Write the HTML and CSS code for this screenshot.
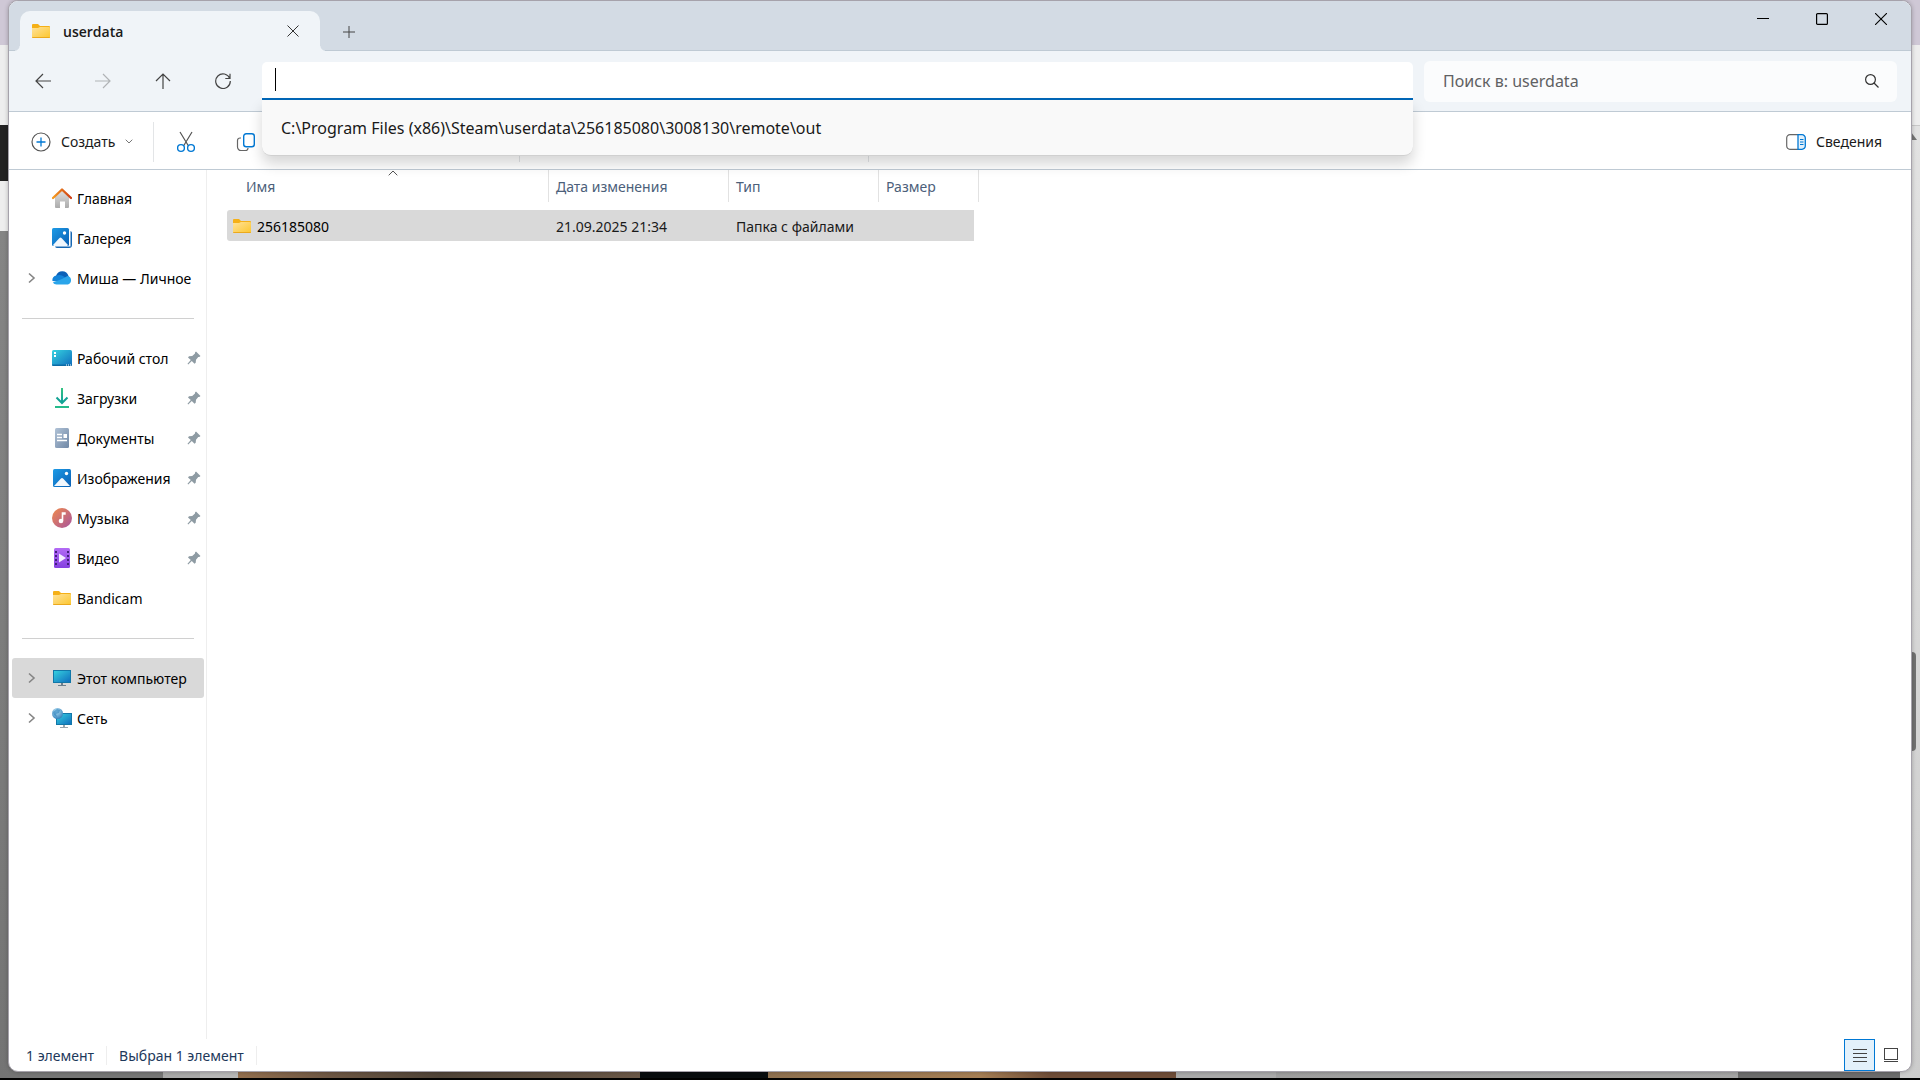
FILE: index.html
```html
<!DOCTYPE html>
<html lang="ru">
<head>
    <meta charset="UTF-8">
    <meta name="viewport" content="width=device-width, initial-scale=1.0">
    <title>userdata</title>
    <link rel="stylesheet" href="styles.css">
</head>
<body>
    <!-- Общие значки -->
    <svg class="defs" width="0" height="0" aria-hidden="true">
        <defs>
            <linearGradient id="g-folder" x1="0" y1="0" x2="1" y2="1">
                <stop offset="0" stop-color="#ffe29a"/><stop offset="1" stop-color="#fcc62e"/>
            </linearGradient>
            <linearGradient id="g-blue" x1="0" y1="0" x2="1" y2="1">
                <stop offset="0" stop-color="#1d9be6"/><stop offset="1" stop-color="#0a5fb4"/>
            </linearGradient>
            <linearGradient id="g-screen" x1="0" y1="0" x2="1" y2="1">
                <stop offset="0" stop-color="#36d3e0"/><stop offset="1" stop-color="#0f6cbd"/>
            </linearGradient>
            <linearGradient id="g-house" x1="0" y1="0" x2="0" y2="1">
                <stop offset="0" stop-color="#e2e2e2"/><stop offset="1" stop-color="#ababab"/>
            </linearGradient>
            <linearGradient id="g-roof" x1="0" y1="0" x2="1" y2="0">
                <stop offset="0" stop-color="#f59b1f"/><stop offset="1" stop-color="#cf3f16"/>
            </linearGradient>
            <linearGradient id="g-down" x1="0" y1="0" x2="0" y2="1">
                <stop offset="0" stop-color="#35c481"/><stop offset="1" stop-color="#0f9fa0"/>
            </linearGradient>
            <linearGradient id="g-doc" x1="0" y1="0" x2="1" y2="1">
                <stop offset="0" stop-color="#b0c2d6"/><stop offset="1" stop-color="#7088a6"/>
            </linearGradient>
            <linearGradient id="g-music" x1="0" y1="0" x2="1" y2="1">
                <stop offset="0" stop-color="#f08a4b"/><stop offset="1" stop-color="#a8559f"/>
            </linearGradient>
            <linearGradient id="g-video" x1="0" y1="0" x2="0" y2="1">
                <stop offset="0" stop-color="#b36bf5"/><stop offset="1" stop-color="#8440e0"/>
            </linearGradient>
            <radialGradient id="g-globe" cx="0.4" cy="0.3" r="0.8">
                <stop offset="0" stop-color="#b9e2f5"/><stop offset="1" stop-color="#2577b5"/>
            </radialGradient>
        </defs>
        <symbol id="folder" viewBox="0 0 20 20">
            <path d="M1 4a1 1 0 0 1 1-1h5l2 2h9a1 1 0 0 1 1 1v2H1z" fill="#f5b017"/>
            <path d="M1 7h6l2-1h9a1 1 0 0 1 1 1v9a1 1 0 0 1-1 1H2a1 1 0 0 1-1-1z" fill="url(#g-folder)"/>
            <path d="M1 16h18a1 1 0 0 1-1 1H2a1 1 0 0 1-1-1z" fill="#eba91d"/>
        </symbol>
        <symbol id="chevron" viewBox="0 0 10 12">
            <path d="M2 1.500l5 4.500-5 4.500" fill="none" stroke="#858585" stroke-width="1.600"/>
        </symbol>
        <symbol id="pin" viewBox="0 0 14 14">
            <path d="M9 .5 13.500 5l-1.200 1-1 .1-2.300 2.700-.3 3-1.200.9-2.700-2.700L1.200 13.500.5 12.800l3.300-3.700L1 6.400l1-1.200 3.200-.2L8 2.500v-1z" fill="#8e9ba3"/>
        </symbol>
    </svg>

    <div class="scroll-hint">
        <svg width="9" height="9" viewBox="0 0 9 9"><path d="M0 0 6 8H0z" fill="#757575"/></svg>
    </div>
    <div class="scroll-thumb"></div>

    <main class="window">
        <header class="titlebar">
            <div class="tab">
                <svg width="20" height="20"><use href="#folder"/></svg>
                <span class="tab-title">userdata</span>
                <button class="tab-close" type="button" aria-label="Закрыть вкладку">
                    <svg width="12" height="12" viewBox="0 0 12 12"><path d="M.5.5l11 11M11.500.5l-11 11" stroke="#333" fill="none"/></svg>
                </button>
            </div>
            <button class="tab-new" type="button" aria-label="Новая вкладка">
                <svg width="12" height="12" viewBox="0 0 12 12"><path d="M6 0v12M0 6h12" stroke="#444" fill="none"/></svg>
            </button>
            <div class="window-controls">
                <button type="button" aria-label="Свернуть"><svg width="12" height="12" viewBox="0 0 12 12"><path d="M0 5.500h12" stroke="#000"/></svg></button>
                <button type="button" aria-label="Развернуть"><svg width="12" height="12" viewBox="0 0 12 12"><rect x=".6" y=".6" width="10.800" height="10.800" rx="1" fill="none" stroke="#000" stroke-width="1.200"/></svg></button>
                <button type="button" aria-label="Закрыть"><svg width="12" height="12" viewBox="0 0 12 12"><path d="M0 0l12 12M12 0L0 12" stroke="#000" stroke-width="1.100"/></svg></button>
            </div>
        </header>

        <div class="navbar">
            <nav class="nav-buttons" aria-label="Переходы">
                <button type="button" aria-label="Назад"><svg width="16" height="16" viewBox="0 0 16 16"><path d="M16 8H1M8 1 1 8l7 7"/></svg></button>
                <button type="button" aria-label="Вперёд" disabled><svg width="16" height="16" viewBox="0 0 16 16"><path d="M0 8h15M8 1l7 7-7 7"/></svg></button>
                <button type="button" aria-label="Вверх"><svg width="16" height="16" viewBox="0 0 16 16"><path d="M8 16V1M1 8l7-7 7 7"/></svg></button>
                <button type="button" aria-label="Обновить"><svg width="16" height="16" viewBox="0 0 16 16"><path d="M14.800 5.500A7.300 7.300 0 1 0 15.300 8M15 .8v4.700h-4.700"/></svg></button>
            </nav>
            <div class="address">
                <input type="text" class="address-input" aria-label="Адрес" autocomplete="off">
                <span class="caret"></span>
                <ul class="suggestions">
                    <li><a href="#">C:\Program Files (x86)\Steam\userdata\256185080\3008130\remote\out</a></li>
                </ul>
            </div>
            <div class="search">
                <input type="text" placeholder="Поиск в: userdata" aria-label="Поиск в: userdata">
                <svg width="14" height="14" viewBox="0 0 14 14"><circle cx="5.500" cy="5.500" r="4.900"/><path d="M9 9l4.500 4.500"/></svg>
            </div>
        </div>

        <div class="commandbar">
            <div class="cmd-group cmd-new">
                <button type="button">
                    <svg width="20" height="20" viewBox="0 0 20 20" fill="none"><circle cx="10" cy="10" r="9" stroke="#555" stroke-width="1.200"/><path d="M10 5.500v9M5.500 10h9" stroke="#0078d4" stroke-width="1.300"/></svg>
                    <span>Создать</span>
                    <svg width="8" height="5" viewBox="0 0 8 5" fill="none"><path d="M.7.7 4 4 7.300.7" stroke="#777"/></svg>
                </button>
            </div>
            <div class="cmd-group cmd-edit">
                <button type="button" aria-label="Вырезать">
                    <svg width="20" height="22" viewBox="0 0 20 22" fill="none"><path d="M4 1l8.500 14M16 1 7.500 15" stroke="#555" stroke-width="1.200"/><circle cx="5" cy="17" r="3.400" stroke="#0078d4" stroke-width="1.400"/><circle cx="15" cy="17" r="3.400" stroke="#0078d4" stroke-width="1.400"/></svg>
                </button>
                <button type="button" aria-label="Копировать">
                    <svg width="20" height="20" viewBox="0 0 20 20" fill="none"><path d="M5 6H4a2.500 2.500 0 0 0-2.500 2.500V15A3.500 3.500 0 0 0 5 18.500h4.500A2.500 2.500 0 0 0 12 16" stroke="#666" stroke-width="1.200"/><rect x="7.700" y="1.700" width="10.600" height="13" rx="2.500" stroke="#0078d4" stroke-width="1.400"/></svg>
                </button>
            </div>
            <div class="cmd-group cmd-view"></div>
            <button class="cmd-details" type="button">
                <svg width="20" height="16" viewBox="0 0 20 16" fill="none"><path d="M12 .7H4A3.300 3.300 0 0 0 .7 4v8A3.300 3.300 0 0 0 4 15.300h8" stroke="#666" stroke-width="1.200"/><path d="M12 .7h4A3.300 3.300 0 0 1 19.300 4v8a3.300 3.300 0 0 1-3.300 3.300h-4z" fill="#e3f1fb" stroke="#0078d4" stroke-width="1.300"/><path d="M14 5.500h3.500M14 8h3.500M14 10.500h3.500" stroke="#0078d4"/></svg>
                <span>Сведения</span>
            </button>
        </div>

        <div class="content">
            <aside class="sidebar">
                <ul>
                    <li><a href="#">
                        <span class="twist"></span>
                        <svg width="20" height="20" viewBox="0 0 20 20"><path d="M3 8.500 10 2l7 6.500V19a1 1 0 0 1-1 1h-3v-6.500H8V20H4a1 1 0 0 1-1-1z" fill="url(#g-house)"/><path d="M1 10 10 1.500 19 10" fill="none" stroke="url(#g-roof)" stroke-width="2.400" stroke-linecap="round" stroke-linejoin="round"/></svg>
                        <span>Главная</span>
                    </a></li>
                    <li><a href="#">
                        <span class="twist"></span>
                        <svg width="20" height="20" viewBox="0 0 20 20"><path d="M18.500 3a2 2 0 0 1 1.500 2v12a3 3 0 0 1-3 3H5a2 2 0 0 1-2-1.500h15.500z" fill="#1667b3"/><rect width="17" height="18" rx="1.500" fill="url(#g-blue)"/><path d="M1 17l6.500-7a1.500 1.500 0 0 1 2 0L16 17a2 2 0 0 1-1 1H2a2 2 0 0 1-1-1z" fill="#f1f7fd"/><circle cx="12.500" cy="5" r="1.700" fill="#fff"/></svg>
                        <span>Галерея</span>
                    </a></li>
                    <li><a href="#">
                        <span class="twist"><svg width="10" height="12"><use href="#chevron"/></svg></span>
                        <svg width="20" height="20" viewBox="0 0 20 20"><path d="M4 8A6.500 6.500 0 0 1 16.500 8L18 12 8 15z" fill="#0a60b8"/><path d="M4.500 7.500A4.500 4.500 0 0 0 .5 13l9.500 1 4-3A8 8 0 0 0 4.500 7.500z" fill="#1283d9"/><path d="M10 11l5.500-3A4.400 4.400 0 0 1 16 16.500H4.500A4.500 4.500 0 0 1 .8 14.500z" fill="#2aa5ea"/></svg>
                        <span>Миша — Личное</span>
                    </a></li>
                </ul>
                <hr>
                <ul>
                    <li><a href="#">
                        <span class="twist"></span>
                        <svg width="20" height="20" viewBox="0 0 20 20"><rect y="2" width="20" height="16" rx="1.500" fill="url(#g-screen)"/><path d="M2 4h2v2H2zM2 7h2v2H2z" fill="#fff"/><path d="M0 16.500h20a1.500 1.500 0 0 1-1.500 1.500h-17A1.500 1.500 0 0 1 0 16.500z" fill="#0b6aa5"/><path d="M14 17h1M16 17h1M18 17h1" stroke="#fff"/></svg>
                        <span>Рабочий стол</span>
                        <svg class="pin" width="14" height="14"><use href="#pin"/></svg>
                    </a></li>
                    <li><a href="#">
                        <span class="twist"></span>
                        <svg width="20" height="20" viewBox="0 0 20 20" fill="none"><path d="M9 0h2v15H9z" fill="url(#g-down)"/><path d="M4.500 9.500 10 15l5.500-5.500" stroke="#14a394" stroke-width="2"/><path d="M3 19h14" stroke="#25bb8b" stroke-width="2"/></svg>
                        <span>Загрузки</span>
                        <svg class="pin" width="14" height="14"><use href="#pin"/></svg>
                    </a></li>
                    <li><a href="#">
                        <span class="twist"></span>
                        <svg width="20" height="20" viewBox="0 0 20 20"><rect x="3" width="14" height="20" rx="1.500" fill="url(#g-doc)"/><path d="M5 6.500h5M5 9.500h5M5 12.500h10" stroke="#fff" stroke-width="1.400"/><path d="M11.500 6H15v4h-3.500z" fill="#fff"/></svg>
                        <span>Документы</span>
                        <svg class="pin" width="14" height="14"><use href="#pin"/></svg>
                    </a></li>
                    <li><a href="#">
                        <span class="twist"></span>
                        <svg width="20" height="20" viewBox="0 0 20 20"><rect x="1" y="1" width="18" height="18" rx="1.500" fill="url(#g-blue)"/><path d="M2 18l6.700-7.300a1.700 1.700 0 0 1 2.600 0L18 18z" fill="#f1f7fd"/><circle cx="14.500" cy="5.500" r="1.700" fill="#fff"/></svg>
                        <span>Изображения</span>
                        <svg class="pin" width="14" height="14"><use href="#pin"/></svg>
                    </a></li>
                    <li><a href="#">
                        <span class="twist"></span>
                        <svg width="20" height="20" viewBox="0 0 20 20"><circle cx="10" cy="10" r="10" fill="url(#g-music)"/><path d="M9.700 4.200h4v2.600h-2.400v6h-1.600z" fill="#fff"/><circle cx="9" cy="13" r="2.300" fill="#fff"/></svg>
                        <span>Музыка</span>
                        <svg class="pin" width="14" height="14"><use href="#pin"/></svg>
                    </a></li>
                    <li><a href="#">
                        <span class="twist"></span>
                        <svg width="20" height="20" viewBox="0 0 20 20"><rect x="2" width="16" height="20" rx="1.500" fill="url(#g-video)"/><path d="M4 3v15M16 3v15" stroke="#42207c" stroke-width="2" stroke-dasharray="2 2"/><path d="M7 5.500v9l7-4.500z" fill="#f4ecff"/></svg>
                        <span>Видео</span>
                        <svg class="pin" width="14" height="14"><use href="#pin"/></svg>
                    </a></li>
                    <li><a href="#">
                        <span class="twist"></span>
                        <svg width="20" height="20"><use href="#folder"/></svg>
                        <span>Bandicam</span>
                    </a></li>
                </ul>
                <hr>
                <ul>
                    <li><a href="#" class="selected">
                        <span class="twist"><svg width="10" height="12"><use href="#chevron"/></svg></span>
                        <svg width="20" height="20" viewBox="0 0 20 20"><path d="M9 15h2v2h3v1H6v-1h3z" fill="#6d7f8c"/><rect x="1.500" y="2.500" width="17" height="12" fill="url(#g-screen)" stroke="#1277a8"/></svg>
                        <span>Этот компьютер</span>
                    </a></li>
                    <li><a href="#">
                        <span class="twist"><svg width="10" height="12"><use href="#chevron"/></svg></span>
                        <svg width="20" height="20" viewBox="0 0 20 20"><path d="M11 17h2v2h3v1H8v-1h3z" fill="#9aa6ae"/><rect x="4.500" y="5.500" width="15" height="11" fill="url(#g-screen)" stroke="#1277a8"/><circle cx="5.500" cy="5.500" r="5.500" fill="url(#g-globe)"/><path d="M5 1l3 1-1 3-3 1 1 3-3-2-1-3z" fill="#2b80ba" opacity=".6"/></svg>
                        <span>Сеть</span>
                    </a></li>
                </ul>
            </aside>

            <section class="files">
                <table>
                    <colgroup>
                        <col class="col-name">
                        <col class="col-date">
                        <col class="col-type">
                        <col class="col-size">
                    </colgroup>
                    <thead>
                        <tr>
                            <th class="name">
                                <button type="button">Имя</button>
                                <svg class="sort" width="10" height="6" viewBox="0 0 10 6"><path d="M.7 5.300 5 1l4.300 4.300" fill="none" stroke="#555"/></svg>
                            </th>
                            <th><button type="button">Дата изменения</button></th>
                            <th><button type="button">Тип</button></th>
                            <th><button type="button">Размер</button></th>
                        </tr>
                    </thead>
                    <tbody>
                        <tr>
                            <td class="name"><div class="file"><svg width="20" height="20"><use href="#folder"/></svg>256185080</div></td>
                            <td>21.09.2025 21:34</td>
                            <td>Папка с файлами</td>
                            <td></td>
                        </tr>
                    </tbody>
                </table>
            </section>
        </div>

        <footer class="statusbar">
            <span class="status">1 элемент</span>
            <span class="status">Выбран 1 элемент</span>
            <div class="views">
                <button type="button" class="active" aria-label="Таблица"><svg width="14" height="14" viewBox="0 0 14 14"><path d="M0 1.500h14M0 5.500h14M0 9.500h14M0 13.500h14" stroke="#444"/></svg></button>
                <button type="button" aria-label="Крупные значки"><svg width="14" height="14" viewBox="0 0 14 14"><rect x=".5" y=".5" width="13" height="11" fill="none" stroke="#444"/><path d="M0 13.500h14" stroke="#444"/></svg></button>
            </div>
        </footer>
    </main>
</body>
</html>
```

FILE: styles.css
```css
* {
    box-sizing: border-box;
}
body {
    margin: 0;
    height: 100vh;
    padding: 0 8px 8px;
    display: flex;
    font-family: "Noto Sans", "Open Sans", sans-serif;
    font-size: 14px;
    color: #1a1a1a;
    /* то, что видно позади окна */
    background:
        linear-gradient(#000, #000) left bottom / 100% 2px no-repeat,
        linear-gradient(#cfc8d6 45px, #eee 45px, #eee 125px, #222 125px, #222 181px, #eee 181px, #eee 231px, #858585 231px, #747474) left top / 20px 100% no-repeat,
        linear-gradient(#cfc8d6 45px, #ededed 45px, #ededed 125px, #c8c8c8 125px, #c8c8c8 126px, #e2e2e2 126px, #ccc) right top / 20px 100% no-repeat,
        linear-gradient(90deg, #777 163px, #a9a9a9 163px, #a9a9a9 200px, #b8b8b8 200px, #b8b8b8 238px, #94704f 238px, #6e5744 330px, #504438 440px, #6b5848 640px, #080c0e 640px, #080c0e 768px, #8f7150 768px, #a67f55 980px, #6f4d38 1050px, #6f4d38 1176px, #aaa 1176px, #aaa 1276px, #9f9f9f 1276px, #a5a5a5 1738px, #6d6d6d 1738px) left bottom / 100% 20px no-repeat,
        #b0a4b4;
}
button {
    font: inherit;
    color: inherit;
    background: none;
    border: none;
    padding: 0;
    cursor: pointer;
    display: flex;
    align-items: center;
    justify-content: center;
}
a {
    color: inherit;
    text-decoration: none;
}
ul {
    list-style: none;
    margin: 0;
    padding: 0;
}
svg {
    flex: none;
}
.defs {
    position: absolute;
}
.scroll-hint {
    position: absolute;
    top: 132px;
    right: 0;
    width: 9px;
    height: 9px;
    display: flex;
}
.scroll-thumb {
    position: absolute;
    top: 652px;
    right: 4px;
    width: 10px;
    height: 99px;
    border-radius: 4px;
    background: #727272;
}
.window {
    position: relative;
    flex: 1;
    min-width: 0;
    display: flex;
    flex-direction: column;
    background: #fff;
    border: 1px solid #a6a2ab;
    border-radius: 10px;
    overflow: hidden;
    box-shadow: 0 0 4px rgba(0, 0, 0, 0.25);
}

/* заголовок */
.titlebar {
    display: flex;
    height: 50px;
    padding-left: 11px;
    background: #d3dbe4;
    border-bottom: 1px solid #bfcad4;
}
.tab {
    position: relative;
    display: flex;
    align-items: center;
    width: 300px;
    height: 40px;
    margin-top: 10px;
    padding: 0 15px 0 11px;
    background: #f0f4f8;
    border-radius: 10px 10px 0 0;
}
.tab::before,
.tab::after {
    content: "";
    position: absolute;
    bottom: 0;
    width: 5px;
    height: 5px;
}
.tab::before {
    right: 100%;
    background: radial-gradient(circle at 0 0, transparent 4px, #f0f4f8 5px);
}
.tab::after {
    left: 100%;
    background: radial-gradient(circle at 100% 0, transparent 4px, #f0f4f8 5px);
}
.tab-title {
    flex: 1;
    margin-left: 12px;
    font-family: "Open Sans", sans-serif;
    font-weight: 600;
}
.tab-close {
    width: 24px;
    height: 24px;
}
.tab-new {
    width: 58px;
    margin-top: 12px;
}
.window-controls {
    display: flex;
    margin-left: auto;
    padding-right: 1px;
}
.window-controls button {
    width: 59px;
    height: 36px;
}

/* навигация и адрес */
.navbar {
    display: flex;
    align-items: center;
    height: 61px;
    padding: 0 14px;
    background: #f0f4f8;
    border-bottom: 1px solid #bfcad4;
}
.nav-buttons {
    display: flex;
    gap: 20px;
    margin-right: 19px;
}
.nav-buttons button {
    width: 40px;
    height: 40px;
}
.nav-buttons svg {
    fill: none;
    stroke: #444;
    stroke-width: 1.2;
}
.nav-buttons button:disabled svg {
    stroke: #b0b3b6;
}
.address {
    position: relative;
    flex: 1;
    height: 38px;
}
.address-input {
    width: 100%;
    height: 38px;
    padding: 0 14px;
    font: inherit;
    font-size: 16px;
    border: none;
    border-bottom: 2px solid #0067b8;
    border-radius: 5px 5px 0 0;
    background: #fff;
    outline: none;
}
.caret {
    position: absolute;
    left: 13px;
    top: 6px;
    width: 1px;
    height: 23px;
    background: #000;
}
.suggestions {
    position: absolute;
    top: 38px;
    left: 0;
    right: 0;
    z-index: 2;
    padding: 6px 0 5px;
    background: #f9f9f9;
    border-bottom: 1px solid #d0d0d0;
    border-radius: 0 0 9px 9px;
    box-shadow: 0 8px 14px rgba(0, 0, 0, 0.16);
}
.suggestions a {
    display: block;
    padding: 0 19px;
    font-size: 16px;
    line-height: 44px;
}
.search {
    display: flex;
    align-items: center;
    width: 473px;
    height: 41px;
    margin-left: 11px;
    padding: 0 18px 0 19px;
    background: #fbfcfd;
    border-radius: 6px;
}
.search input {
    flex: 1;
    min-width: 0;
    padding: 0;
    font: inherit;
    font-size: 16px;
    border: none;
    background: none;
    outline: none;
}
.search input::placeholder {
    color: #5f6163;
}
.search svg {
    fill: none;
    stroke: #333;
    stroke-width: 1.2;
}

/* панель команд */
.commandbar {
    display: flex;
    align-items: center;
    height: 58px;
    padding-top: 2px;
    border-bottom: 1px solid #bfcad4;
}
.cmd-group {
    display: flex;
    align-items: center;
    height: 40px;
    border-right: 1px solid #e3e5e7;
}
.cmd-new {
    width: 145px;
    padding-left: 22px;
}
.cmd-new button {
    gap: 10px;
}
.cmd-edit {
    width: 366px;
    padding-left: 12px;
    gap: 20px;
}
.cmd-edit button {
    width: 40px;
    height: 40px;
}
.cmd-view {
    width: 349px;
}
.cmd-details {
    gap: 10px;
    margin-left: auto;
    padding-right: 29px;
}

/* содержимое */
.content {
    display: flex;
    flex: 1;
    min-height: 0;
}
.sidebar {
    width: 198px;
    padding: 8px 2px 0 3px;
    border-right: 1px solid #eee;
}
.sidebar a {
    display: flex;
    align-items: center;
    height: 40px;
    padding: 0 3px 0 15px;
    border-radius: 3px;
    color: #000;
    white-space: nowrap;
}
.sidebar a.selected {
    background: #d9d9d9;
}
.sidebar a span + svg {
    margin-right: 5px;
}
.sidebar .twist {
    display: flex;
    width: 25px;
}
.sidebar svg.pin {
    margin: 0 0 0 auto;
}
.sidebar hr {
    height: 1px;
    margin: 20px 10px 19px;
    border: none;
    background: #d0d0d0;
}
.files {
    flex: 1;
    padding-left: 20px;
}
table {
    width: 752px;
    table-layout: fixed;
    border-collapse: collapse;
}
.col-name {
    width: 322px;
}
.col-date {
    width: 180px;
}
.col-type {
    width: 150px;
}
.col-size {
    width: 100px;
}
th {
    position: relative;
    height: 40px;
    padding: 0;
    vertical-align: top;
    font-weight: 400;
    color: #4c607a;
}
th button {
    width: 100%;
    height: 32px;
    padding: 0 7px;
    justify-content: flex-start;
    border-right: 1px solid #e2e2e2;
}
th.name button {
    padding-left: 19px;
}
.sort {
    position: absolute;
    top: 0;
    left: 161px;
}
td {
    height: 31px;
    padding: 1px 7px 0;
    background: #d9d9d9;
}
td.name {
    padding-left: 5px;
    border-radius: 3px 0 0 3px;
    color: #000;
}
td:last-child {
    background: linear-gradient(#d9d9d9, #d9d9d9) left / calc(100% - 5px) 100% no-repeat;
}
.file {
    display: flex;
    align-items: center;
    gap: 5px;
}

/* строка состояния */
.statusbar {
    display: flex;
    align-items: center;
    height: 32px;
    padding: 0 5px;
    color: #1e395b;
}
.status {
    padding: 0 12px;
    border-right: 1px solid #eee;
}
.views {
    display: flex;
    align-self: stretch;
    margin-left: auto;
}
.views button {
    width: 31px;
}
.views .active {
    background: #e3f1fb;
    border: 1px solid #0078d4;
}
```
